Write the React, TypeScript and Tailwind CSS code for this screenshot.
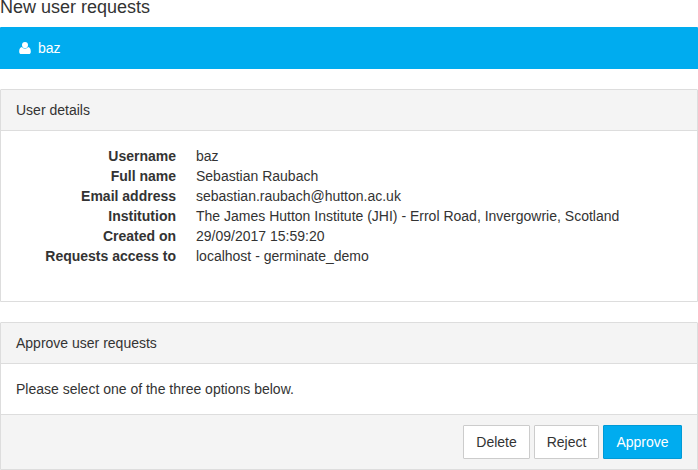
import React from "react";

const details = [
  ["Username", "baz"],
  ["Full name", "Sebastian Raubach"],
  ["Email address", "sebastian.raubach@hutton.ac.uk"],
  ["Institution", "The James Hutton Institute (JHI) - Errol Road, Invergowrie, Scotland"],
  ["Created on", "29/09/2017 15:59:20"],
  ["Requests access to", "localhost - germinate_demo"],
];

function UserIcon() {
  return (
    <svg viewBox="0 0 12 12" className="mr-[7px] h-3 w-3" fill="currentColor">
      <ellipse cx="6" cy="3.1" rx="3" ry="3.1" />
      <path d="M3 5.1C1 5.3 0.2 7.2 0.2 9.7C0.2 11.2 1 12 2.2 12H9.8C11 12 11.8 11.2 11.8 9.7C11.8 7.2 11 5.3 9 5.1C8.3 6.1 7.2 6.7 6 6.7S3.7 6.1 3 5.1Z" />
    </svg>
  );
}

export default function App() {
  return (
    <div className="h-[470px] w-[698px] overflow-hidden bg-white font-['Liberation_Sans',Arial,sans-serif] text-sm leading-5 text-[#333]">
      <h1 className="h-[27px] text-lg leading-[14px]">New user requests</h1>
      <div className="flex h-[42px] items-center rounded-t-[1px] bg-[#00acef] pl-[19px] text-white">
        <UserIcon />
        <span>baz</span>
      </div>
      <section className="mt-5 h-[213px] rounded-t-[1px] border border-[#ddd]">
        <header className="h-[41px] border-b border-[#ddd] bg-[#f4f4f4] px-[15px] py-[10px]">User details</header>
        <dl className="pt-[15px]">
          {details.map(([label, value]) => (
            <div key={label} className="flex h-5">
              <dt className="w-[175px] text-right font-bold">{label}</dt>
              <dd className="ml-5">{value}</dd>
            </div>
          ))}
        </dl>
      </section>
      <section className="mt-5 h-[148px] rounded-t-[1px] border border-[#ddd]">
        <header className="h-[41px] border-b border-[#ddd] bg-[#f4f4f4] px-[15px] py-[10px]">Approve user requests</header>
        <p className="h-[50px] p-[15px]">Please select one of the three options below.</p>
        <footer className="flex h-[55px] justify-end gap-1 border-t border-[#ddd] bg-[#f4f4f4] px-[15px] py-[10px]">
          <button className="h-[34px] w-[67px] rounded-[1px] border border-[#ccc] bg-white">Delete</button>
          <button className="h-[34px] w-[65px] rounded-[1px] border border-[#ccc] bg-white">Reject</button>
          <button className="h-[34px] w-[79px] rounded-[1px] border border-[#009ad6] bg-[#00acef] text-white">Approve</button>
        </footer>
      </section>
    </div>
  );
}
